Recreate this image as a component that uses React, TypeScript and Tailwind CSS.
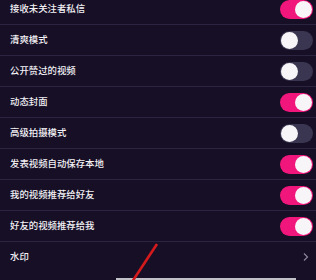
import React from "react";

type Row = { label: string; on?: boolean; arrow?: boolean };

const rows: Row[] = [
  { label: "接收未关注者私信", on: true },
  { label: "清爽模式", on: false },
  { label: "公开赞过的视频", on: false },
  { label: "动态封面", on: true },
  { label: "高级拍摄模式", on: false },
  { label: "发表视频自动保存本地", on: true },
  { label: "我的视频推荐给好友", on: true },
  { label: "好友的视频推荐给我", on: true },
  { label: "水印", arrow: true },
];

function Toggle({ on }: { on: boolean }) {
  return (
    <div
      className={
        on
          ? "flex h-[19px] w-[33px] items-center justify-end rounded-full bg-[#f0167c] px-[1px]"
          : "flex h-[19px] w-[33px] items-center justify-start rounded-full bg-[#3a3550] px-[1px]"
      }
    >
      <div className="h-[17px] w-[17px] rounded-full bg-[#f7f5f7]" />
    </div>
  );
}

export default function App() {
  return (
    <div
      className="relative h-[280px] w-[316px] overflow-hidden bg-[#160f26]"
      style={{ fontFamily: '"Noto Sans CJK SC", "Noto Sans", sans-serif' }}
    >
      <div className="-mt-[6px] flex flex-col">
        {rows.map((r, i) => (
          <div
            key={i}
            className={
              r.arrow
                ? "flex h-[30px] items-center justify-between pl-[10px] pr-[4px]"
                : "flex h-[31px] items-center justify-between border-b border-[#2c2542] pl-[10px] pr-[3px]"
            }
          >
            <span className="text-[9.4px] font-medium leading-none text-[#f3f1f5]">{r.label}</span>
            {r.arrow ? (
              <svg width="8" height="10" viewBox="0 0 8 10" className="mr-[2px]">
                <path d="M2 1.5 L5.5 5 L2 8.5" fill="none" stroke="#8a8596" strokeWidth="1.2" />
              </svg>
            ) : (
              <Toggle on={!!r.on} />
            )}
          </div>
        ))}
      </div>
      <div className="absolute bottom-0 left-[116px] h-[2px] w-[180px] bg-[#c2c1c8]" />
      <svg className="absolute left-0 top-0" width="316" height="280">
        <line x1="157" y1="244" x2="132" y2="282" stroke="#d41a1c" strokeWidth="2.6" />
      </svg>
    </div>
  );
}
